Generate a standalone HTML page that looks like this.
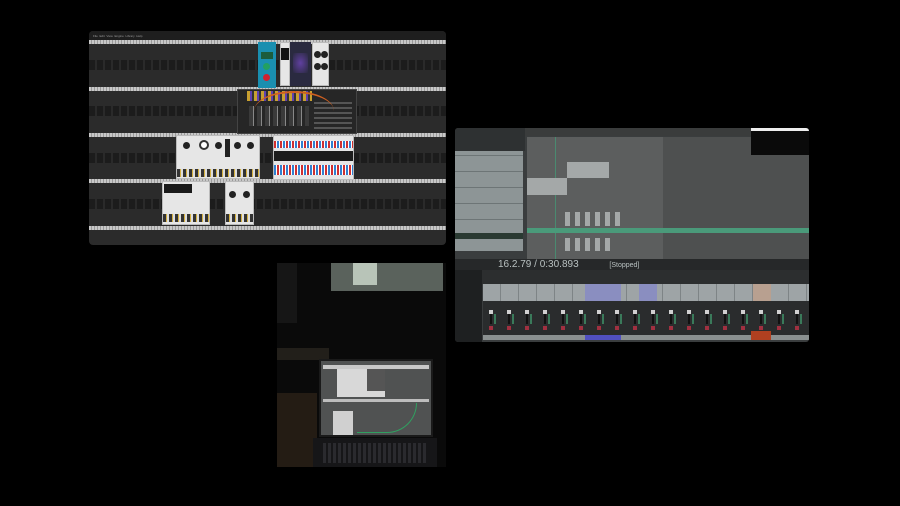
<!DOCTYPE html>
<html><head><meta charset="utf-8"><style>
*{margin:0;padding:0;box-sizing:border-box}
body{width:900px;height:506px;background:#000;position:relative;overflow:hidden;font-family:"Liberation Sans",sans-serif}
.a{position:absolute}
.rail{position:absolute;left:0;width:357px;height:4px;background:repeating-linear-gradient(90deg,#c8c8c8 0 2px,#9a9a9a 2px 3px)}
.band{position:absolute;left:0;width:357px;height:10px;background:repeating-linear-gradient(90deg,#1c1c1c 0 6px,#2a2a2a 6px 8px)}
.wm{position:absolute;background:#e6e6e6;border:1px solid #bbb}
.knob{position:absolute;width:7px;height:7px;border-radius:50%;background:#222}
.jacks{position:absolute;height:8px;background:repeating-linear-gradient(90deg,#333 0 3px,#d4b040 3px 4px,#ddd 4px 6px)}
</style></head><body>

<!-- VCV panel -->
<div class="a" style="left:89px;top:31px;width:357px;height:214px;background:#2b2b2b;border-radius:4px;overflow:hidden">
  <div class="a" style="left:0;top:0;width:357px;height:9px;background:#1e1e1e;font-size:3px;color:#999;padding:3px 4px">File&nbsp;&nbsp;Edit&nbsp;&nbsp;View&nbsp;&nbsp;Engine&nbsp;&nbsp;Library&nbsp;&nbsp;Help</div>
  <div class="rail" style="top:9px"></div>
  <div class="band" style="top:29px"></div>
  <div class="rail" style="top:56px"></div>
  <div class="band" style="top:75px"></div>
  <div class="rail" style="top:102px"></div>
  <div class="band" style="top:122px"></div>
  <div class="rail" style="top:148px"></div>
  <div class="band" style="top:168px"></div>
  <div class="rail" style="top:195px"></div>
  <div class="a" style="left:169px;top:11px;width:18px;height:46px;background:#1a8fb0"></div>
  <div class="a" style="left:172px;top:21px;width:12px;height:7px;background:#1c5c3c"></div>
  <div class="knob" style="left:174px;top:32px;background:#22a060"></div>
  <div class="knob" style="left:174px;top:43px;background:#d02030"></div>
  <div class="wm" style="left:191px;top:11px;width:10px;height:44px"></div>
  <div class="a" style="left:192px;top:17px;width:8px;height:12px;background:#111"></div>
  <div class="a" style="left:201px;top:11px;width:21px;height:44px;background:#2a2a40"></div>
  <div class="a" style="left:204px;top:22px;width:15px;height:20px;background:radial-gradient(#6040a0,#2a2a40)"></div>
  <div class="wm" style="left:223px;top:11px;width:17px;height:44px"></div>
  <div class="knob" style="left:225px;top:20px"></div><div class="knob" style="left:232px;top:20px"></div>
  <div class="knob" style="left:225px;top:32px"></div><div class="knob" style="left:232px;top:32px"></div>
  <div class="a" style="left:148px;top:58px;width:120px;height:45px;background:#262626;border:1px solid #444"></div>
  <div class="a" style="left:158px;top:60px;width:65px;height:10px;background:repeating-linear-gradient(90deg,#c8a030 0 3px,#6040b0 3px 5px,#333 5px 7px)"></div>
  <div class="a" style="left:160px;top:75px;width:60px;height:20px;background:repeating-linear-gradient(90deg,#3a3a3a 0 4px,#888 4px 5px,#262626 5px 8px)"></div>
  <div class="a" style="left:225px;top:70px;width:38px;height:28px;background:repeating-linear-gradient(0deg,#555 0 2px,#262626 2px 5px)"></div>
  <div class="a" style="left:165px;top:60px;width:80px;height:40px;border-top:2px solid #d06020;border-radius:50%"></div>
  <div class="wm" style="left:87px;top:104px;width:84px;height:44px"></div>
  <div class="knob" style="left:94px;top:111px"></div><div class="knob" style="left:110px;top:109px;width:10px;height:10px;background:#fff;border:2px solid #333"></div>
  <div class="knob" style="left:126px;top:111px"></div><div class="a" style="left:136px;top:108px;width:5px;height:18px;background:#222"></div>
  <div class="knob" style="left:145px;top:111px"></div><div class="knob" style="left:158px;top:111px"></div>
  <div class="jacks" style="left:88px;top:138px;width:82px"></div>
  <div class="wm" style="left:184px;top:104px;width:81px;height:45px"></div>
  <div class="a" style="left:185px;top:110px;width:79px;height:7px;background:repeating-linear-gradient(90deg,#d03030 0 2px,#fff 2px 3px,#3080d0 3px 5px,#fff 5px 6px)"></div>
  <div class="a" style="left:185px;top:120px;width:79px;height:10px;background:#1c1c1c"></div>
  <div class="a" style="left:185px;top:134px;width:79px;height:10px;background:repeating-linear-gradient(90deg,#3080d0 0 2px,#fff 2px 3px,#d03030 3px 5px,#fff 5px 6px)"></div>
  <div class="wm" style="left:73px;top:150px;width:48px;height:44px"></div>
  <div class="a" style="left:75px;top:153px;width:28px;height:9px;background:#1a1a1a"></div>
  <div class="jacks" style="left:74px;top:183px;width:46px"></div>
  <div class="wm" style="left:136px;top:150px;width:29px;height:44px"></div>
  <div class="knob" style="left:140px;top:160px"></div><div class="knob" style="left:154px;top:160px"></div>
  <div class="jacks" style="left:137px;top:183px;width:27px"></div>
</div>

<!-- Reaper panel -->
<div class="a" style="left:455px;top:128px;width:354px;height:214px;background:#3a3d3e;border-radius:3px;overflow:hidden">
  <div class="a" style="left:0;top:0;width:70px;height:23px;background:#2e3132"></div>
  <div class="a" style="left:0;top:23px;width:68px;height:100px;background:repeating-linear-gradient(0deg,#8d9596 0 15px,#6d7576 15px 16px)"></div>
  <div class="a" style="left:0;top:105px;width:68px;height:6px;background:#2a3a32"></div>
  <div class="a" style="left:70px;top:0;width:284px;height:8px;background:#3a3c3c"></div>
  <div class="a" style="left:72px;top:9px;width:282px;height:122px;background:#4e5050"></div>
  <div class="a" style="left:72px;top:9px;width:136px;height:122px;background:#5c5e5e"></div>
  <div class="a" style="left:100px;top:9px;width:1px;height:122px;background:#4a8a70"></div>
  <div class="a" style="left:112px;top:34px;width:42px;height:16px;background:#a4a8a8"></div>
  <div class="a" style="left:72px;top:50px;width:40px;height:17px;background:#a4a8a8"></div>
  <div class="a" style="left:110px;top:84px;width:60px;height:14px;background:repeating-linear-gradient(90deg,#a4a8a8 0 5px,transparent 5px 10px)"></div>
  <div class="a" style="left:72px;top:100px;width:282px;height:5px;background:#4a9a7a"></div>
  <div class="a" style="left:110px;top:110px;width:50px;height:13px;background:repeating-linear-gradient(90deg,#a4a8a8 0 5px,transparent 5px 10px)"></div>
  <div class="a" style="left:296px;top:0;width:58px;height:27px;background:#0a0a0a;border-top:3px solid #eee"></div>
  <div class="a" style="left:0;top:131px;width:354px;height:11px;background:#262829;color:#b8c0c0;font-size:10px;line-height:11px;padding-left:43px">16.2.79 / 0:30.893 <span style="margin-left:28px;font-size:7px">[Stopped]</span></div>
  <div class="a" style="left:0;top:142px;width:354px;height:14px;background:#2c2e2f"></div>
  <div class="a" style="left:0;top:142px;width:27px;height:72px;background:#1e2021"></div>
  <div class="a" style="left:28px;top:156px;width:326px;height:17px;background:repeating-linear-gradient(90deg,#9ea4a6 0 17px,#7e8486 17px 18px)"></div>
  <div class="a" style="left:130px;top:156px;width:36px;height:17px;background:#8a8ec0"></div>
  <div class="a" style="left:184px;top:156px;width:18px;height:17px;background:#8a8ec0"></div>
  <div class="a" style="left:298px;top:156px;width:18px;height:17px;background:#b8a090"></div>
  <div class="a" style="left:28px;top:173px;width:326px;height:34px;background:#2a2c2d"></div>
  <div class="a" style="left:28px;top:182px;width:326px;height:4px;background:repeating-linear-gradient(90deg,transparent 0 6px,#d0d0d0 6px 10px,transparent 10px 18px)"></div>
  <div class="a" style="left:28px;top:186px;width:326px;height:10px;background:repeating-linear-gradient(90deg,transparent 0 7px,#111 7px 9px,transparent 9px 11px,#3a7a5a 11px 13px,transparent 13px 18px)"></div>
  <div class="a" style="left:28px;top:198px;width:326px;height:4px;background:repeating-linear-gradient(90deg,transparent 0 6px,#a03040 6px 10px,transparent 10px 18px)"></div>
  <div class="a" style="left:28px;top:207px;width:326px;height:5px;background:#8a9090"></div>
  <div class="a" style="left:130px;top:207px;width:36px;height:5px;background:#5050c0"></div>
  <div class="a" style="left:296px;top:203px;width:20px;height:9px;background:#b04020"></div>
</div>

<!-- photo -->
<div class="a" style="left:277px;top:263px;width:169px;height:204px;background:#0a0a0a;overflow:hidden">
  <div class="a" style="left:0;top:0;width:20px;height:60px;background:#161616"></div>
  <div class="a" style="left:54px;top:0;width:112px;height:28px;background:#5a625c"></div>
  <div class="a" style="left:76px;top:0;width:24px;height:22px;background:#b8c4b8"></div>
  <div class="a" style="left:0;top:85px;width:52px;height:12px;background:#221f1a"></div>
  <div class="a" style="left:0;top:130px;width:40px;height:74px;background:#241c14"></div>
  <div class="a" style="left:42px;top:96px;width:114px;height:78px;background:#505252;border:2px solid #1a1a1a"></div>
  <div class="a" style="left:46px;top:102px;width:106px;height:4px;background:#c8c8c8"></div>
  <div class="a" style="left:46px;top:136px;width:106px;height:3px;background:#bdbdbd"></div>
  <div class="a" style="left:60px;top:106px;width:48px;height:28px;background:#d8d8d8"></div>
  <div class="a" style="left:90px;top:106px;width:18px;height:22px;background:#555"></div>
  <div class="a" style="left:56px;top:148px;width:20px;height:24px;background:#d0d0d0"></div>
  <div class="a" style="left:80px;top:140px;width:60px;height:30px;border-bottom:1px solid #30a060;border-right:1px solid #30a060;border-radius:0 0 40px 0"></div>
  <div class="a" style="left:36px;top:175px;width:124px;height:29px;background:#161618"></div>
  <div class="a" style="left:46px;top:180px;width:104px;height:20px;background:repeating-linear-gradient(90deg,#2a2a2e 0 3px,#161618 3px 5px)"></div>
</div>
</body></html>
